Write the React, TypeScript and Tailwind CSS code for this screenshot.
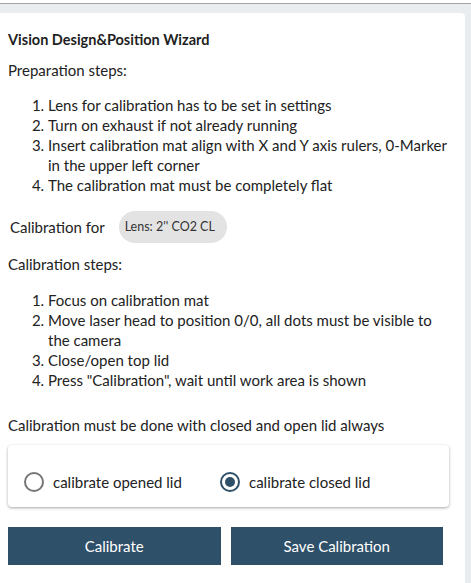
import React, { useState } from 'react';

const prepSteps = [
  'Lens for calibration has to be set in settings',
  'Turn on exhaust if not already running',
  'Insert calibration mat align with X and Y axis rulers, 0-Marker in the upper left corner',
  'The calibration mat must be completely flat',
];

const calibSteps = [
  'Focus on calibration mat',
  'Move laser head to position 0/0, all dots must be visible to the camera',
  'Close/open top lid',
  'Press "Calibration", wait until work area is shown',
];

function Radio({ checked, label, onClick }: { checked: boolean; label: string; onClick: () => void }) {
  return (
    <button onClick={onClick} className="flex items-center gap-[9px] text-left">
      <span
        className={
          checked
            ? 'flex h-[20px] w-[20px] items-center justify-center rounded-full border-2 border-[#2f5069]'
            : 'flex h-[20px] w-[20px] items-center justify-center rounded-full border-2 border-[#767676]'
        }
      >
        {checked && <span className="h-[10px] w-[10px] rounded-full bg-[#2f5069]" />}
      </span>
      <span className="text-[15px] leading-[20px] text-[#222]">{label}</span>
    </button>
  );
}

export default function App() {
  const [lid, setLid] = useState<'opened' | 'closed'>('closed');

  return (
    <div
      className="flex min-h-screen flex-col bg-white pt-[3px]"
      style={{ fontFamily: 'Lato, "Noto Sans", sans-serif' }}
    >
      <div className="flex flex-1 flex-col border-t border-[#a3a3a3] bg-[#e9edf0] pr-[6px] pt-[9px]">
        <div className="flex-1 rounded-tr-[4px] bg-white pl-[8px] pt-[17px] text-[#222]">
          <h1 className="text-[14.5px] font-bold leading-[20px] text-[#1f1f1f]">Vision Design&amp;Position Wizard</h1>

          <p className="mt-[10px] text-[15px] leading-[20px]">Preparation steps:</p>
          <ol className="mt-[15px] list-decimal pl-[40px] pr-[16px] text-[15px] leading-[20px]">
            {prepSteps.map(step => (
              <li key={step}>{step}</li>
            ))}
          </ol>

          <div className="mt-[16px] flex items-center pl-[2px]">
            <span className="text-[15px] leading-[20px]">Calibration for</span>
            <span className="ml-[14px] flex h-[32px] items-center rounded-full bg-[#e3e3e3] pl-[6px] pr-[12px] text-[12.5px] text-[#333]">
              Lens: 2'' CO2 CL
            </span>
          </div>

          <p className="mt-[11px] text-[15px] leading-[20px]">Calibration steps:</p>
          <ol className="mt-[16px] list-decimal pl-[40px] pr-[30px] text-[15px] leading-[20px]">
            {calibSteps.map(step => (
              <li key={step}>{step}</li>
            ))}
          </ol>

          <p className="mt-[25px] text-[15px] leading-[20px]">Calibration must be done with closed and open lid always</p>

          <div className="mt-[10px] flex h-[62px] w-[441px] items-start rounded-[4px] bg-white pl-[16px] pt-[27px] shadow-[0_1px_3px_rgba(0,0,0,0.35)]">
            <div className="w-[196px]">
              <Radio checked={lid === 'opened'} label="calibrate opened lid" onClick={() => setLid('opened')} />
            </div>
            <Radio checked={lid === 'closed'} label="calibrate closed lid" onClick={() => setLid('closed')} />
          </div>

          <div className="mt-[20px] grid w-[435px] grid-cols-2 gap-[10px]">
            <button className="h-[38px] bg-[#2f5069] text-[15px] text-white">Calibrate</button>
            <button className="h-[38px] bg-[#2f5069] text-[15px] text-white">Save Calibration</button>
          </div>
        </div>
      </div>
    </div>
  );
}
